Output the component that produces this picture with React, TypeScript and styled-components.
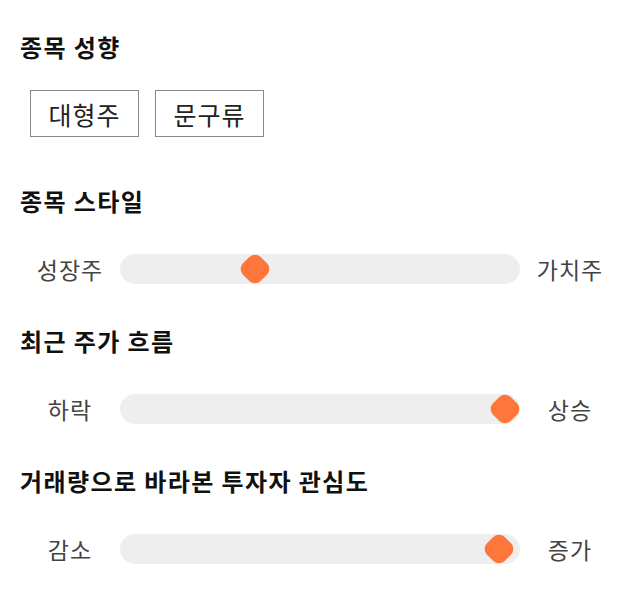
import React from "react";
import styled, { createGlobalStyle } from "styled-components";

const GlobalStyle = createGlobalStyle`
  html, body {
    margin: 0;
    padding: 0;
    background: #ffffff;
  }
  body {
    font-family: "Noto Sans CJK KR", "Noto Sans", sans-serif;
  }
`;

const Page = styled.div`
  width: 640px;
  padding: 32px 20px 0;
  box-sizing: border-box;
  display: flex;
  flex-direction: column;
`;

const Heading = styled.h2<{ $gap: number }>`
  margin: 0 0 ${(p) => p.$gap}px;
  font-size: 24px;
  line-height: 30px;
  letter-spacing: 1.4px;
  font-weight: 700;
  color: #111111;
`;

const Section = styled.section<{ $after: number }>`
  display: flex;
  flex-direction: column;
  margin-bottom: ${(p) => p.$after}px;
`;

const ChipRow = styled.div`
  display: flex;
  gap: 16px;
  padding-left: 10px;
`;

const Chip = styled.button`
  width: 109px;
  height: 47px;
  padding: 0;
  border: 1px solid #888888;
  background: #ffffff;
  font-family: inherit;
  font-size: 25px;
  line-height: 30px;
  letter-spacing: 1px;
  color: #222222;
  cursor: pointer;
`;

const SliderRow = styled.div`
  display: grid;
  grid-template-columns: 100px 1fr 100px;
  align-items: center;
  height: 30px;
`;

const SideLabel = styled.span`
  text-align: center;
  font-size: 23px;
  line-height: 30px;
  letter-spacing: 1px;
  color: #444444;
`;

const Track = styled.div`
  position: relative;
  height: 30px;
  border-radius: 15px;
  background: #eeeeee;
`;

const Thumb = styled.div`
  position: absolute;
  top: 50%;
  width: 25px;
  height: 25px;
  border-radius: 8px;
  background: #ff763b;
  transform: translate(-50%, -50%) rotate(45deg);
`;

type SliderProps = { low: string; high: string; value: number };

const Slider = ({ low, high, value }: SliderProps) => (
  <SliderRow>
    <SideLabel>{low}</SideLabel>
    <Track>
      <Thumb style={{ left: `${value * 100}%` }} />
    </Track>
    <SideLabel>{high}</SideLabel>
  </SliderRow>
);

const sliders = [
  { title: "종목 스타일", low: "성장주", high: "가치주", value: 0.337 },
  { title: "최근 주가 흐름", low: "하락", high: "상승", value: 0.963 },
  { title: "거래량으로 바라본 투자자 관심도", low: "감소", high: "증가", value: 0.947 },
];

export default function App() {
  return (
    <>
      <GlobalStyle />
      <Page>
        <Section $after={49}>
          <Heading $gap={28}>종목 성향</Heading>
          <ChipRow>
            <Chip>대형주</Chip>
            <Chip>문구류</Chip>
          </ChipRow>
        </Section>
        {sliders.map((s) => (
          <Section key={s.title} $after={42}>
            <Heading $gap={38}>{s.title}</Heading>
            <Slider low={s.low} high={s.high} value={s.value} />
          </Section>
        ))}
      </Page>
    </>
  );
}
